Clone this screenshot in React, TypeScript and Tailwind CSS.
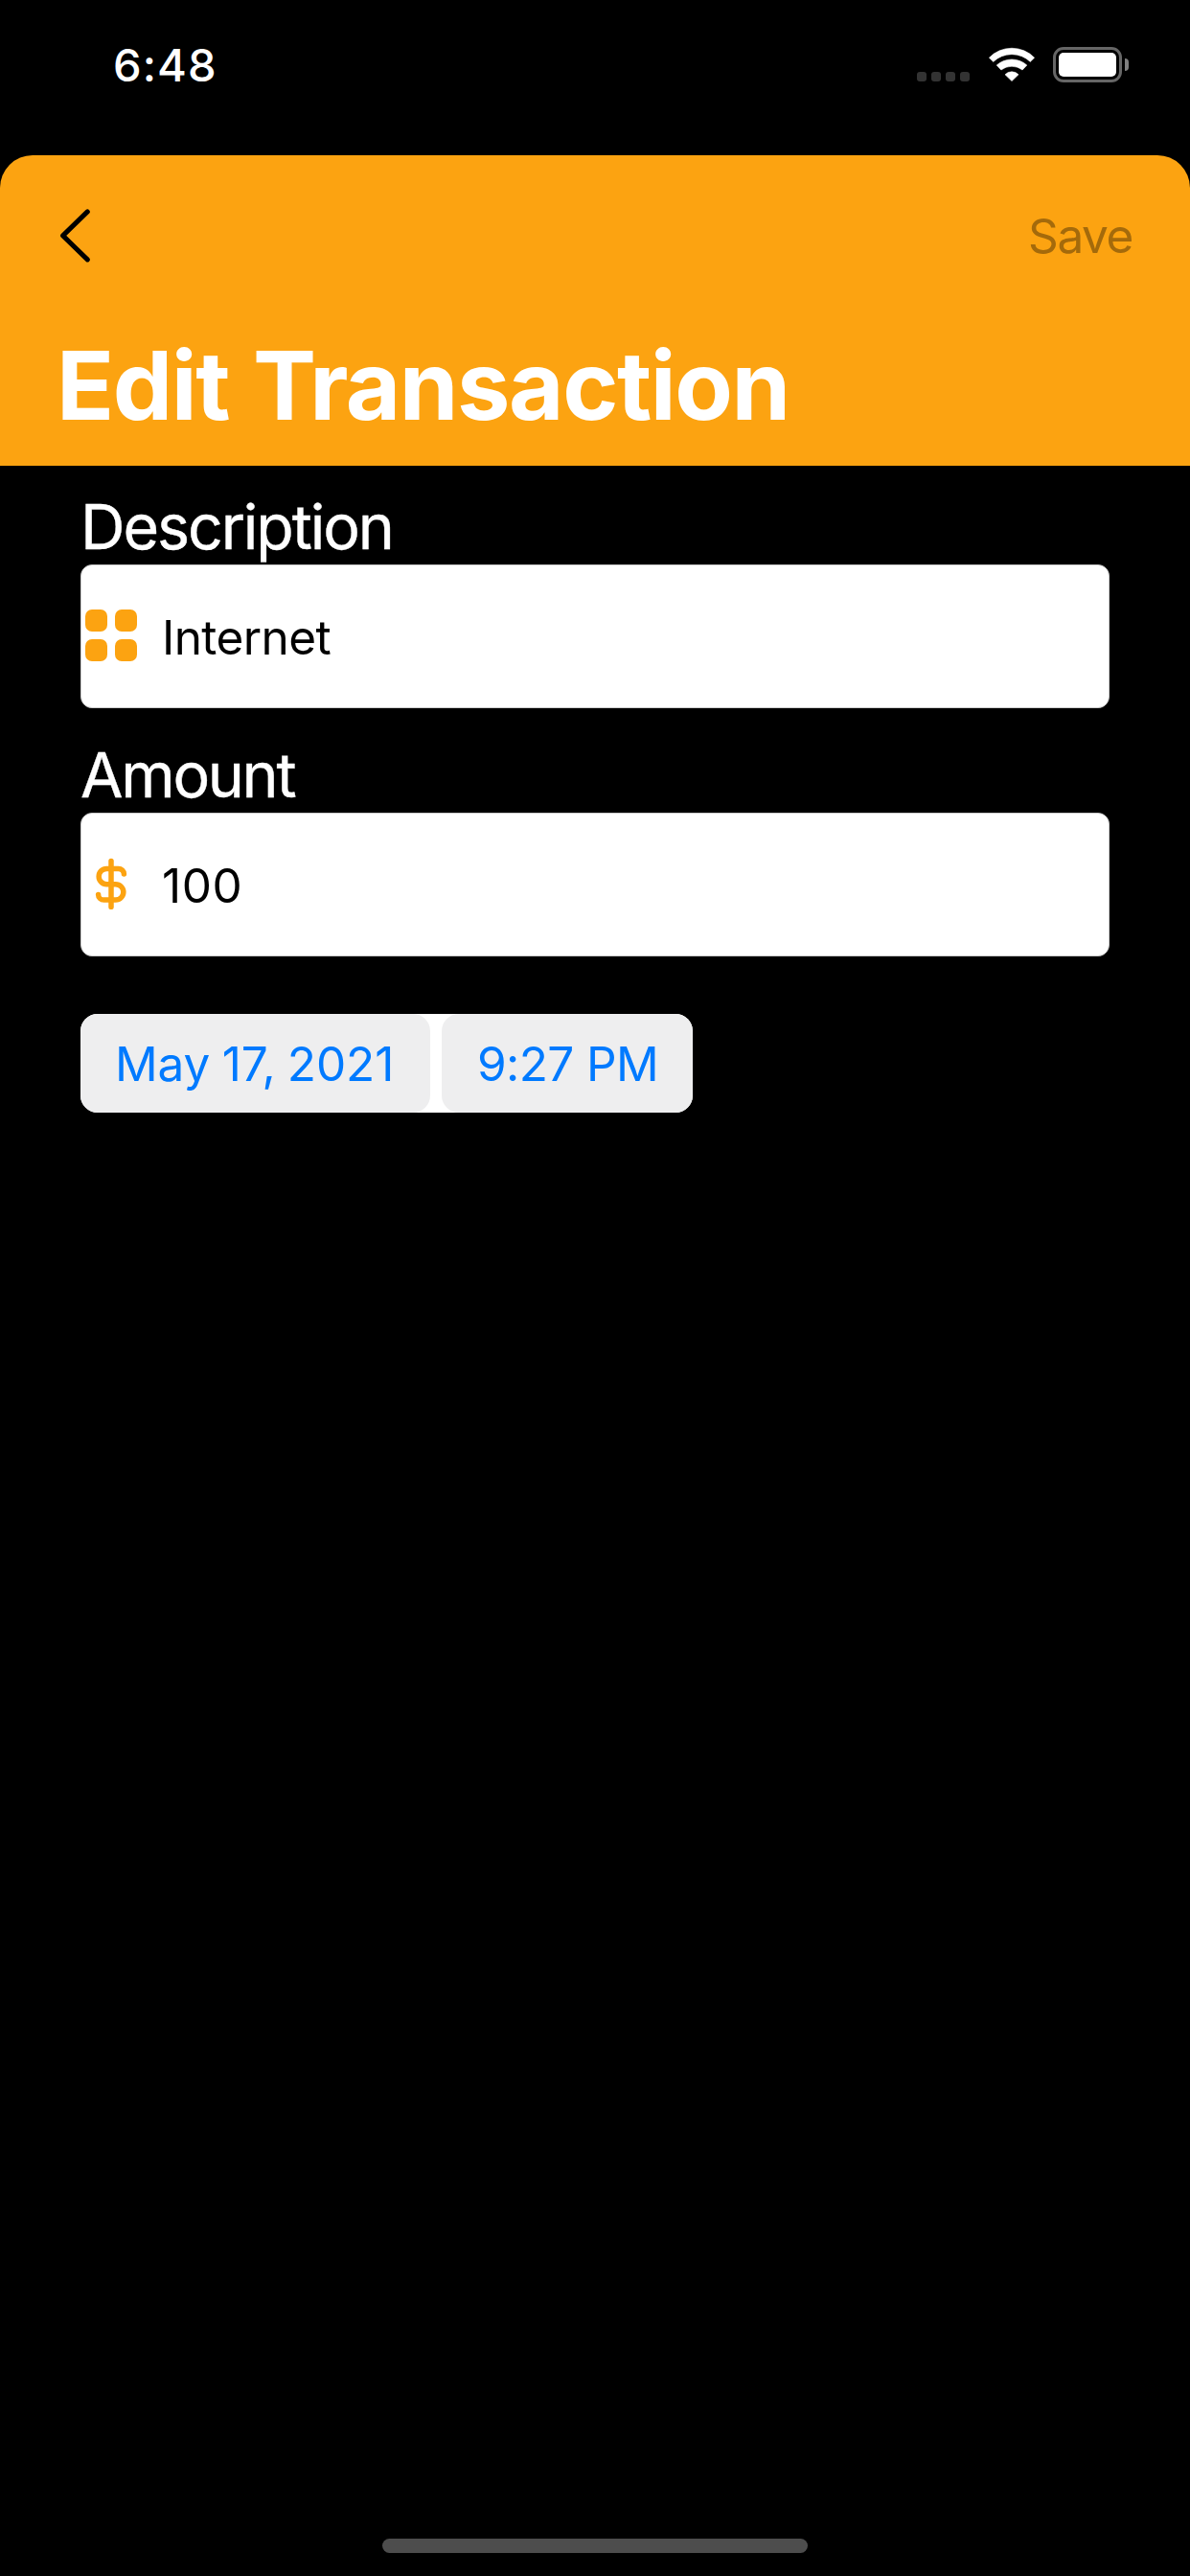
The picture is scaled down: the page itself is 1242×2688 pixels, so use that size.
import type { ReactNode } from "react";

function StatusBar() {
  return (
    <header className="flex h-[162px] items-start justify-between pr-16 pl-[118px]">
      <time className="mt-10 text-[47px] leading-14 font-medium tracking-[1.1px] text-white">6:48</time>
      <div className="mt-[49px] flex h-[37px] items-start">
        <div className="mt-[26px] mr-5 flex gap-[5px]">
          {[0, 1, 2, 3].map((dot) => (
            <span key={dot} className="size-[10px] rounded-[3px] bg-[#333333]" />
          ))}
        </div>
        <svg className="mr-[19px] h-9 w-12" viewBox="0 0 48 36" fill="white">
          <path d="M.4 11.2A33 33 0 0 1 47.6 11.2L43.3 15.4A28 28 0 0 0 4.7 15.4Z" stroke="white" strokeWidth="0.6" strokeLinejoin="round" />
          <path d="M8.2 19A23.8 23.8 0 0 1 39.8 19L35.1 24A18 18 0 0 0 12.9 24Z" stroke="white" strokeWidth="0.6" strokeLinejoin="round" />
          <path d="M17 28.8A9.7 9.7 0 0 1 31 28.8L24 35.6Z" stroke="white" strokeWidth="0.6" strokeLinejoin="round" />
        </svg>
        <div className="h-[37px] w-[72px] rounded-[11px] border-3 border-[#666666] p-[3px]">
          <div className="h-[25px] w-full rounded-[5px] bg-white" />
        </div>
        <span className="mt-3 ml-[3px] h-[13px] w-1 rounded-r-full bg-[#808080]" />
      </div>
    </header>
  );
}

function SheetHeader() {
  return (
    <div className="h-[324px] rounded-t-[34px] bg-[#fca311] pl-[59px]">
      <div className="flex h-[168px] items-center justify-between pr-[60px]">
        <button aria-label="Back" className="ml-[3px]">
          <svg className="h-[56px] w-[34px]" viewBox="0 0 34 56" fill="none" stroke="black" strokeWidth="5" strokeLinecap="round" strokeLinejoin="round">
            <path d="M29.3 2.9L3.6 27.9L29.3 52.9" />
          </svg>
        </button>
        <button className="text-[49.5px] leading-[60px] tracking-[-1.4px] text-[#a46a0b]">Save</button>
      </div>
      <h1 className="mt-3 text-[99px] leading-[120px] font-bold tracking-[-1.4px] [word-spacing:3px] text-white">Edit Transaction</h1>
    </div>
  );
}

function GridIcon() {
  return (
    <svg className="-mt-0.5 size-[54px]" viewBox="0 0 54 54" fill="#fca311">
      <rect width="23" height="23" rx="7" />
      <rect x="31" width="23" height="23" rx="7" />
      <rect y="31" width="23" height="23" rx="7" />
      <rect x="31" y="31" width="23" height="23" rx="7" />
    </svg>
  );
}

function DollarIcon() {
  return (
    <svg className="-mt-0.5 size-[54px]" viewBox="0 0 54 54" fill="none" stroke="#fca311" strokeWidth="5.5" strokeLinecap="round">
      <path d="M27 3.4V51.4" />
      <path d="M40.4 17C40.4 13.8 37.6 11.4 34.6 11.4H22.3A8.15 8.15 0 0 0 22.3 27.7H31.7A8.15 8.15 0 0 1 31.7 44H19.4C16.4 44 13.6 41.8 13.6 38.4" />
    </svg>
  );
}

type FieldProps = { label: string; labelClass: string; valueClass: string; value: string; icon: ReactNode };

function Field({ label, labelClass, valueClass, value, icon }: FieldProps) {
  return (
    <div>
      <div className={`h-[79px] pt-px text-[64.5px] leading-[79px] text-white [-webkit-text-stroke:0.4px_white] ${labelClass}`}>{label}</div>
      <div className="flex h-[150px] items-center rounded-xl border border-[#cccccc] bg-white pl-1">
        {icon}
        <span className={`ml-[26px] pt-0.5 text-[49.5px] leading-[60px] text-black ${valueClass}`}>{value}</span>
      </div>
    </div>
  );
}

export default function App() {
  return (
    <div className="flex h-[2688px] w-[1242px] flex-col bg-black font-['Inter',sans-serif]">
      <StatusBar />
      <SheetHeader />
      <main className="flex flex-1 flex-col items-start px-[84px] pt-6">
        <div className="flex w-full flex-col gap-[30px]">
          <Field label="Description" labelClass="tracking-[-2.1px]" value="Internet" valueClass="tracking-[-0.6px]" icon={<GridIcon />} />
          <Field label="Amount" labelClass="tracking-[-2.3px]" value="100" valueClass="tracking-[0.57px]" icon={<DollarIcon />} />
        </div>
        <div className="mt-[60px] flex h-[103px] gap-3 rounded-[18px] bg-white text-[49.5px] leading-[60px] text-[#007aff]">
          <button className="w-[365px] rounded-[18px] bg-[#eeeeef] pl-[36px] text-left tracking-[-0.1px] [word-spacing:-1.5px] whitespace-nowrap">May 17, 2021</button>
          <button className="w-[262px] rounded-[18px] bg-[#eeeeef] pl-[37px] text-left tracking-[-0.6px] whitespace-nowrap">9:27 PM</button>
        </div>
      </main>
      <div className="mb-6 h-[15px] w-[444px] self-center rounded-full bg-[#4d4d4d]" />
    </div>
  );
}
